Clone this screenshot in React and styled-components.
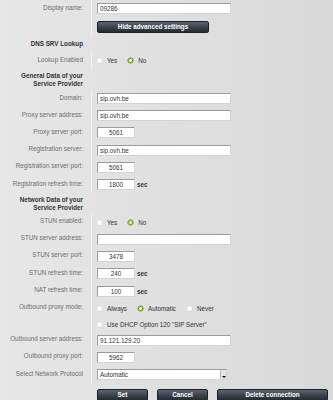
import React from 'react';
import styled, { createGlobalStyle } from 'styled-components';

const GlobalStyle = createGlobalStyle`
  html, body {
    margin: 0;
    height: 100%;
    overflow: hidden;
  }
  body {
    background: linear-gradient(90deg, #e7e7e7 0%, #e0e0e0 45%, #d9d9d9 100%);
    font-family: "Liberation Sans", Arial, sans-serif;
    font-size: 6.3px;
  }
`;

const Page = styled.div`
  display: flex;
  flex-direction: column;
`;

const Row = styled.div`
  display: grid;
  grid-template-columns: 91px 1fr;
  height: ${props => props.$h || 17}px;
`;

const Label = styled.div`
  align-self: center;
  text-align: right;
  padding-right: 8px;
  padding-bottom: 2px;
  color: #6e6e6e;
  line-height: 8px;
`;

const Heading = styled(Label)`
  color: #333;
  font-weight: bold;
  padding-bottom: 0;
`;

const Cell = styled.div`
  display: flex;
  align-items: center;
  padding-left: ${props => props.$pad ?? 5}px;
  border-left: 1px solid ${props => (props.$line ? '#f3f3f3' : 'transparent')};
`;

const TextInput = styled.input`
  box-sizing: border-box;
  width: ${props => (props.$short ? 38 : 134)}px;
  height: 11px;
  padding: 0 2px;
  margin: 0;
  border: 1px solid;
  border-color: #9c9c9c #d4d4d4 #d4d4d4 #9c9c9c;
  background: #fff;
  color: #333;
  font-family: "Liberation Sans", Arial, sans-serif;
  font-size: 6.3px;
  text-align: ${props => (props.$short ? 'center' : 'left')};
  outline: none;
`;

const Unit = styled.span`
  margin-left: 2px;
  color: #333;
  font-weight: bold;
`;

const Button = styled.button`
  box-sizing: border-box;
  width: ${props => props.$w}px;
  height: 12px;
  padding: 0;
  border: 1px solid #1b2027;
  border-radius: 2px;
  background: linear-gradient(180deg, #5d6571 0%, #3c434e 50%, #262c35 100%);
  color: #fff;
  font-family: "Liberation Sans", Arial, sans-serif;
  font-size: 6.3px;
  font-weight: bold;
`;

const Options = styled.div`
  display: flex;
  align-items: center;
  gap: 11px;
  padding-left: 4px;
`;

const Option = styled.label`
  display: flex;
  align-items: center;
  gap: 5px;
  color: #333;
`;

const Radio = styled.span`
  box-sizing: border-box;
  width: 5px;
  height: 5px;
  border-radius: 50%;
  background: ${props =>
    props.$on ? 'radial-gradient(circle, #eef8d0 0 35%, #6aa620 45%)' : '#fff'};
  box-shadow: ${props => (props.$on ? '0 0 0 0.5px #5a941a' : '0 0 0 0.5px #d0d0d0')};
`;

const Select = styled.div`
  box-sizing: border-box;
  display: flex;
  align-items: center;
  justify-content: space-between;
  width: 130px;
  height: 11px;
  padding-left: 2px;
  border: 1px solid;
  border-color: #9c9c9c #d4d4d4 #d4d4d4 #9c9c9c;
  background: #fff;
  color: #333;
`;

const Arrow = styled.span`
  display: flex;
  align-items: flex-end;
  justify-content: center;
  width: 5px;
  height: 9px;
  background: #e6e6e6;
  border-left: 1px solid #bbb;

  &::after {
    content: '';
    margin-bottom: 1px;
    border-left: 2px solid transparent;
    border-right: 2px solid transparent;
    border-top: 2px solid #000;
  }
`;

const ButtonCell = styled.div`
  display: flex;
  align-items: flex-start;
  gap: 9px;
  padding: 5px 0 0 6px;
`;

function Field({ label, value, short, unit, h }) {
  return (
    <Row $h={h}>
      <Label>{label}</Label>
      <Cell $line>
        <TextInput $short={short} defaultValue={value} readOnly />
        {unit && <Unit>{unit}</Unit>}
      </Cell>
    </Row>
  );
}

function RadioRow({ label, options, selected, h }) {
  return (
    <Row $h={h}>
      <Label>{label}</Label>
      <Cell $line $pad={1}>
        <Options>
          {options.map(opt => (
            <Option key={opt}>
              <Radio $on={opt === selected} />
              {opt}
            </Option>
          ))}
        </Options>
      </Cell>
    </Row>
  );
}

function App() {
  return (
    <Page>
      <GlobalStyle />
      <Field label="Display name:" value="09286" h={17.5} />
      <Row $h={18.5}>
        <Label />
        <Cell $line>
          <Button $w={112}>Hide advanced settings</Button>
        </Cell>
      </Row>

      <Row $h={16}>
        <Heading>DNS SRV Lookup</Heading>
      </Row>
      <RadioRow label="Lookup Enabled" options={['Yes', 'No']} selected="No" h={17} />

      <Row $h={21}>
        <Heading>General Data of your<br />Service Provider</Heading>
      </Row>
      <Field label="Domain:" value="sip.ovh.be" h={17.2} />
      <Field label="Proxy server address:" value="sip.ovh.be" h={17.2} />
      <Field label="Proxy server port:" value="5061" short h={17.2} />
      <Field label="Registration server:" value="sip.ovh.be" h={17.2} />
      <Field label="Registration server port:" value="5061" short h={17.2} />
      <Field label="Registration refresh time:" value="1800" short unit="sec" h={17.2} />

      <Row $h={20.8}>
        <Heading>Network Data of your<br />Service Provider</Heading>
      </Row>
      <RadioRow label="STUN enabled:" options={['Yes', 'No']} selected="No" h={17} />
      <Field label="STUN server address:" value="" h={17} />
      <Field label="STUN server port:" value="3478" short h={17} />
      <Field label="STUN refresh time:" value="240" short unit="sec" h={17.3} />
      <Field label="NAT refresh time:" value="100" short unit="sec" h={17.7} />
      <RadioRow
        label="Outbound proxy mode:"
        options={['Always', 'Automatic', 'Never']}
        selected="Automatic"
        h={16.5}
      />
      <RadioRow label="" options={['Use DHCP Option 120 "SIP Server"']} selected="" h={15.5} />
      <Field label="Outbound server address:" value="91.121.129.20" h={17} />
      <Field label="Outbound proxy port:" value="5962" short h={17} />
      <Row $h={18}>
        <Label>Select Network Protocol</Label>
        <Cell $line>
          <Select>
            Automatic
            <Arrow />
          </Select>
        </Cell>
      </Row>

      <Row $h={18}>
        <Label />
        <ButtonCell>
          <Button $w={51}>Set</Button>
          <Button $w={51}>Cancel</Button>
          <Button $w={111}>Delete connection</Button>
        </ButtonCell>
      </Row>
    </Page>
  );
}

export default App;
